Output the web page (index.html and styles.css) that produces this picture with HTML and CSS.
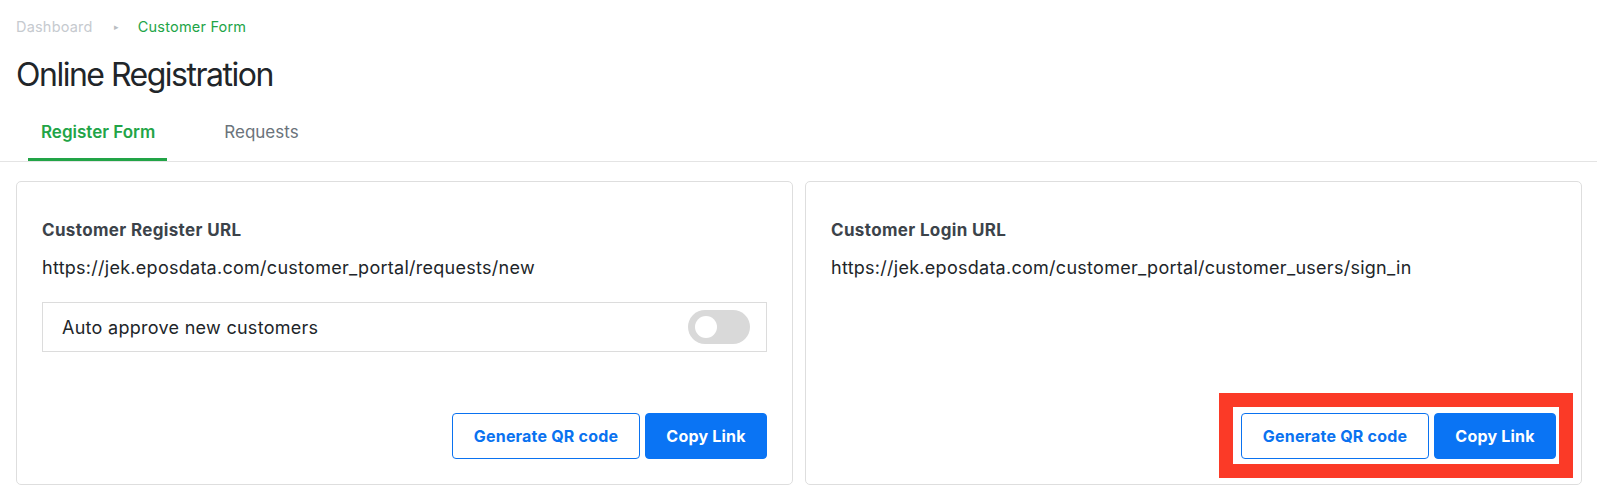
FILE: index.html
```html
<!DOCTYPE html>
<html lang="en">
<head>
<meta charset="utf-8">
<title>Online Registration</title>
<link rel="stylesheet" href="styles.css">
</head>
<body>
<div class="page">
  <nav class="breadcrumb">
    <span class="crumb">Dashboard</span>
    <span class="sep">&#9656;</span>
    <span class="crumb active">Customer Form</span>
  </nav>
  <h1 class="title">Online Registration</h1>
  <div class="tabs">
    <div class="tab active">Register Form</div>
    <div class="tab">Requests</div>
  </div>
  <div class="cards">
    <section class="card">
      <h2 class="card-title">Customer Register URL</h2>
      <p class="url">https://jek.eposdata.com/customer_portal/requests/new</p>
      <div class="option">
        <span class="option-label">Auto approve new customers</span>
        <span class="switch"><span class="knob"></span></span>
      </div>
      <div class="actions">
        <button class="btn btn-outline">Generate QR code</button>
        <button class="btn btn-primary">Copy Link</button>
      </div>
    </section>
    <section class="card">
      <h2 class="card-title">Customer Login URL</h2>
      <p class="url">https://jek.eposdata.com/customer_portal/customer_users/sign_in</p>
      <div class="actions highlighted">
        <button class="btn btn-outline">Generate QR code</button>
        <button class="btn btn-primary">Copy Link</button>
        <span class="annotation"></span>
      </div>
    </section>
  </div>
</div>
</body>
</html>
```

FILE: styles.css
```css
* { box-sizing: border-box; }

body {
  margin: 0;
  background: #ffffff;
  font-family: Inter, "Liberation Sans", Arial, sans-serif;
  color: #212529;
}

.breadcrumb {
  padding: 16px 16px 0;
  font-size: 14.5px;
  line-height: 21px;
  letter-spacing: 0.2px;
  display: flex;
  align-items: center;
}

.crumb { color: #c6cacf; }
.crumb.active { color: #22a447; }

.sep {
  color: #b9bdc2;
  font-size: 9px;
  margin: 0 19px 0 21px;
}

.title {
  margin: 19px 0 0;
  padding: 0 16px;
  font-size: 32px;
  line-height: 38.4px;
  font-weight: 400;
  letter-spacing: -1.5px;
  color: #212529;
}

.tabs {
  margin-top: 14px;
  padding-left: 28px;
  border-bottom: 1px solid #e4e4e4;
  display: flex;
}

.tab {
  padding: 12px 13px 14px 13px;
  font-size: 17px;
  line-height: 24px;
  color: #6b737b;
  border-bottom: 3px solid transparent;
}

.tab + .tab { margin-left: 44px; }

.tab.active {
  color: #22a447;
  font-weight: 600;
  border-bottom-color: #22a447;
  padding-right: 12px;
}

.cards {
  display: grid;
  grid-template-columns: 1fr 1fr;
  gap: 12px;
  padding: 19px 15px 0 16px;
}

.card {
  border: 1px solid #dedede;
  border-radius: 5px;
  padding: 36px 25px 25px;
  display: flex;
  flex-direction: column;
}

.card-title {
  margin: 0;
  font-size: 17px;
  line-height: 24px;
  font-weight: 700;
  letter-spacing: 0.35px;
  color: #3c434a;
}

.url {
  margin: 12px 0 0;
  font-size: 18px;
  line-height: 27px;
  letter-spacing: 0.27px;
  color: #212529;
}

.option {
  margin: 21px 0 61px;
  height: 50px;
  border: 1px solid #dcdcdc;
  padding: 0 16px 0 19px;
  display: flex;
  align-items: center;
  justify-content: space-between;
}

.option-label {
  font-size: 18px;
  letter-spacing: 0.28px;
  color: #212529;
}

.switch {
  width: 62px;
  height: 34px;
  border-radius: 17px;
  background: #d9d9d9;
  display: flex;
  align-items: center;
  padding-left: 7px;
}

.knob {
  width: 22px;
  height: 22px;
  border-radius: 50%;
  background: #ffffff;
}

.actions {
  margin-top: auto;
  align-self: flex-end;
  display: flex;
  gap: 5px;
}

.highlighted { position: relative; }

.annotation {
  position: absolute;
  top: -20px;
  left: -22px;
  right: -17px;
  bottom: -19px;
  border: 14px solid #fb3a27;
  pointer-events: none;
}

.btn {
  height: 46px;
  padding: 0;
  border-radius: 4px;
  font-family: inherit;
  font-size: 16px;
  font-weight: 700;
  letter-spacing: 0.2px;
  cursor: pointer;
}

.btn-outline {
  width: 188px;
  background: #ffffff;
  color: #0a72f0;
  border: 1px solid #0a72f0;
}

.btn-primary {
  width: 122px;
  background: #0a74f4;
  color: #ffffff;
  border: 1px solid #0a74f4;
}
```
